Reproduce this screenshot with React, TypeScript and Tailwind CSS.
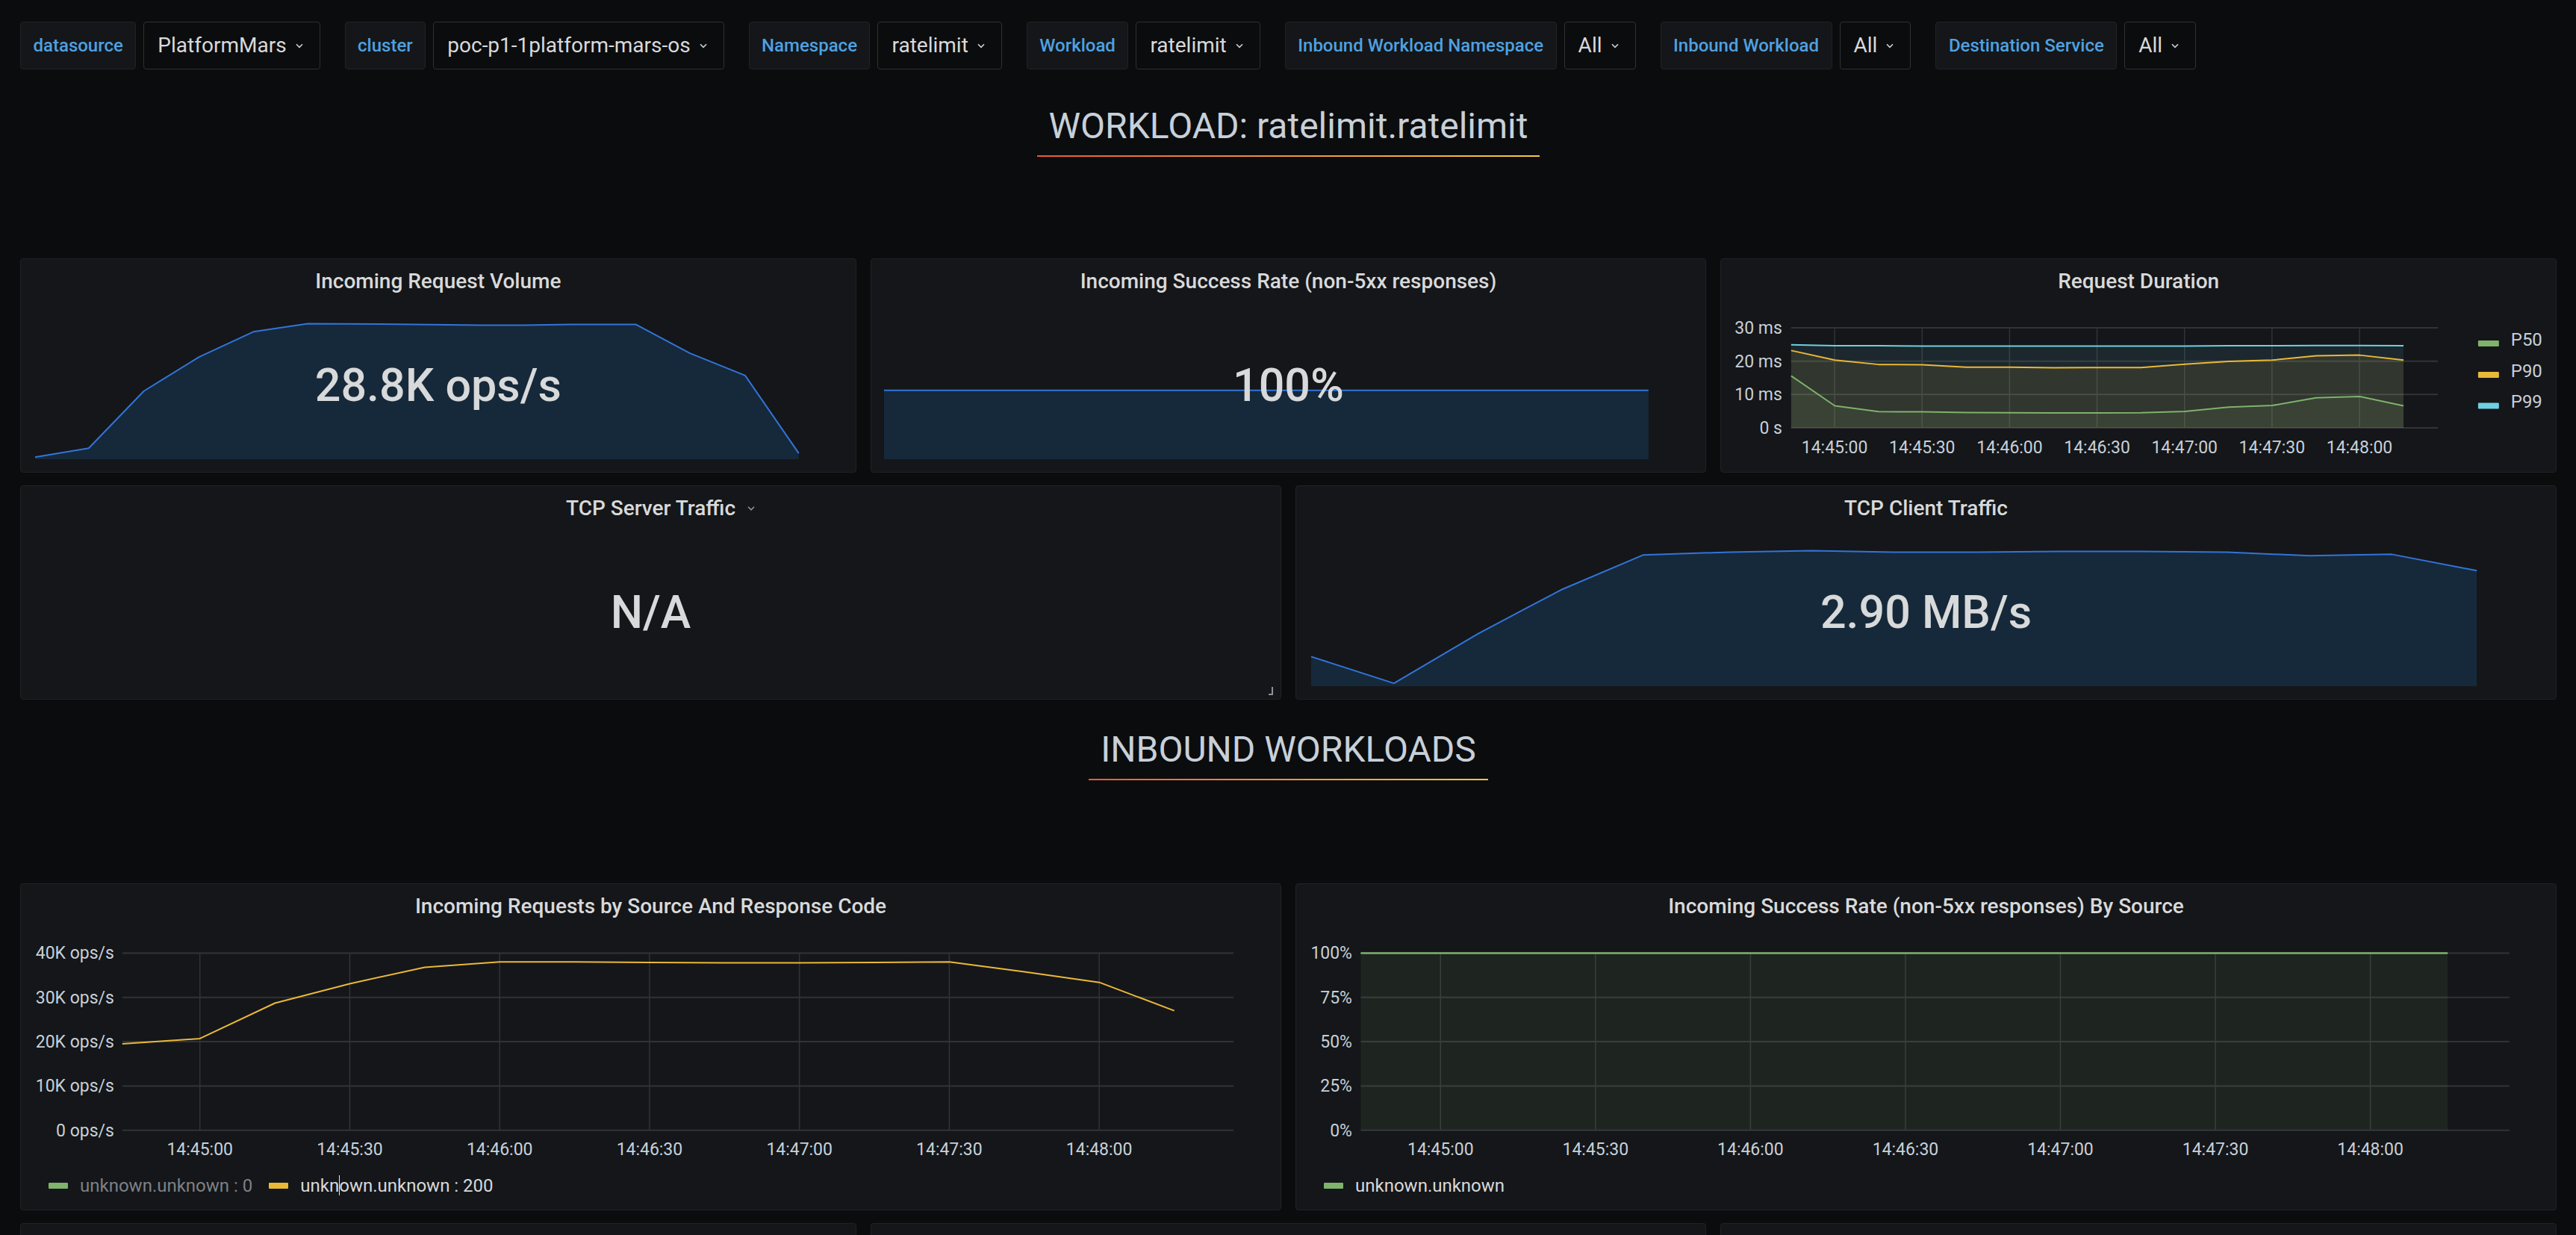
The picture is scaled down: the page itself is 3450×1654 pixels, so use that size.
import React from "react";

type Pt = [number, number];
const pts = (a: Pt[]) => a.map(([x, y]) => `${x},${y}`).join(" ");

const SPARK_LINE = "#3274d9";
const SPARK_FILL = "rgba(31,118,189,0.2)";
const GRID = "#313337";
const AXIS = "#c7d0d9";
const FONT = "Roboto, 'Liberation Sans', sans-serif";
const TIMES = ["14:45:00", "14:45:30", "14:46:00", "14:46:30", "14:47:00", "14:47:30", "14:48:00"];

const VARS = [
  { label: "datasource", value: "PlatformMars" },
  { label: "cluster", value: "poc-p1-1platform-mars-os" },
  { label: "Namespace", value: "ratelimit" },
  { label: "Workload", value: "ratelimit" },
  { label: "Inbound Workload Namespace", value: "All" },
  { label: "Inbound Workload", value: "All" },
  { label: "Destination Service", value: "All" },
];

function Chevron({ className = "" }: { className?: string }) {
  return (
    <svg width="10" height="7" viewBox="0 0 10 7" className={className}>
      <path d="M1 1.2 L5 5.4 L9 1.2" fill="none" stroke="currentColor" strokeWidth="1.6" />
    </svg>
  );
}

function Sparkline({ w, line, bottom }: { w: number; line: Pt[]; bottom: number }) {
  const area: Pt[] = [[line[0][0], bottom], ...line, [line[line.length - 1][0], bottom]];
  return (
    <svg className="absolute inset-0 w-full h-full" viewBox={`0 0 ${w} 287`} preserveAspectRatio="none">
      <polygon points={pts(area)} fill={SPARK_FILL} />
      <polyline
        points={pts(line)}
        fill="none"
        stroke={SPARK_LINE}
        strokeWidth={2}
        vectorEffect="non-scaling-stroke"
        strokeLinejoin="round"
      />
    </svg>
  );
}

function Title({ children }: { children: React.ReactNode }) {
  return (
    <div className="relative h-[60px] shrink-0 flex items-center justify-center text-[28px] font-medium leading-none text-[#d8d9da]">
      {children}
    </div>
  );
}

const panelCls = "relative flex flex-col rounded-[4px] border border-[#202226] bg-[#141619] overflow-hidden";

function StatPanel({
  title,
  value,
  w,
  line,
  extra,
}: {
  title: React.ReactNode;
  value: string;
  w: number;
  line?: Pt[];
  extra?: React.ReactNode;
}) {
  return (
    <div className={`${panelCls} h-[287px]`}>
      {line && <Sparkline w={w} line={line} bottom={270} />}
      <Title>{title}</Title>
      <div className="relative flex-1 flex items-center justify-center pb-[6px] text-[61px] font-medium leading-none text-[#d8d9da]">
        {value}
      </div>
      {extra}
    </div>
  );
}

function SectionHeader({ text, h, pt }: { text: string; h: string; pt: string }) {
  return (
    <div className={`flex justify-center ${h} ${pt}`}>
      <div className="inline-flex flex-col h-fit">
        <div className="px-[16px] text-[48px] leading-[1.2] text-[#c7d0d9]">{text}</div>
        <div className="mt-[10px] h-[2px] bg-linear-to-r from-[#ea5a35] to-[#f7c844]" />
      </div>
    </div>
  );
}

function RequestDuration() {
  const x = (i: number) => 94 + 58.71 * i;
  const y = (v: number) => 226 - 4.467 * v;
  const p99 = [24.9, 24.6, 24.6, 24.5, 24.5, 24.5, 24.5, 24.5, 24.5, 24.5, 24.6, 24.6, 24.7, 24.7, 24.6];
  const p90 = [23.2, 20.3, 19.0, 18.9, 18.2, 18.2, 18.0, 18.1, 18.1, 19.1, 19.9, 20.3, 21.6, 21.8, 20.3];
  const p50 = [15.6, 6.6, 4.85, 4.8, 4.6, 4.55, 4.5, 4.5, 4.55, 4.9, 6.2, 6.7, 9.0, 9.4, 6.6];
  const series = [
    { name: "P99", c: "#6ed0e0", fill: "rgba(110,208,224,0.1)", d: p99 },
    { name: "P90", c: "#eab839", fill: "rgba(234,184,57,0.1)", d: p90 },
    { name: "P50", c: "#7eb26d", fill: "rgba(126,178,109,0.1)", d: p50 },
  ];
  const line = (d: number[]): Pt[] => d.map((v, i) => [x(i), y(v)]);
  const area = (d: number[]): Pt[] => [[x(0), y(0)], ...line(d), [x(d.length - 1), y(0)]];
  const legend = [
    { name: "P50", c: "#7eb26d", y: 116 },
    { name: "P90", c: "#eab839", y: 158 },
    { name: "P99", c: "#6ed0e0", y: 199.5 },
  ];
  return (
    <div className={`${panelCls} h-[287px]`}>
      <Title>Request Duration</Title>
      <svg width="100%" height={225} viewBox="0 60 1120 225" preserveAspectRatio="none" className="block" fontFamily={FONT}>
        {[0, 10, 20, 30].map((v) => (
          <line key={v} x1={94} x2={962} y1={y(v)} y2={y(v)} stroke={GRID} strokeWidth={2} />
        ))}
        {TIMES.map((t, k) => (
          <line key={t} x1={152.4 + 117.4 * k} x2={152.4 + 117.4 * k} y1={y(30)} y2={y(0)} stroke={GRID} strokeWidth={1.5} />
        ))}
        {series.map((s) => (
          <polygon key={s.name + "f"} points={pts(area(s.d))} fill={s.fill} />
        ))}
        {series.map((s) => (
          <polyline key={s.name} points={pts(line(s.d))} fill="none" stroke={s.c} strokeWidth={2} strokeLinejoin="round" />
        ))}
        {[
          ["30 ms", 30],
          ["20 ms", 20],
          ["10 ms", 10],
          ["0 s", 0],
        ].map(([t, v]) => (
          <text key={t as string} x={82} y={y(v as number) + 8} textAnchor="end" fontSize={23} fill={AXIS}>
            {t}
          </text>
        ))}
        {TIMES.map((t, k) => (
          <text key={t} x={152.4 + 117.4 * k} y={260} textAnchor="middle" fontSize={23} fill={AXIS}>
            {t}
          </text>
        ))}
        {legend.map((l) => (
          <g key={l.name}>
            <rect x={1016} y={l.y - 7} width={28} height={8} rx={1} fill={l.c} />
            <text x={1060} y={l.y} fontSize={24} fill={AXIS}>
              {l.name}
            </text>
          </g>
        ))}
      </svg>
    </div>
  );
}

function LegendItem({ color, text, dim }: { color: string; text: string; dim?: boolean }) {
  return (
    <div className="flex items-center gap-[16px]">
      <span className="w-[26px] h-[8px] rounded-[1px]" style={{ background: color }} />
      <span className={dim ? "text-[#7d8187]" : "text-[#d8d9da]"}>{text}</span>
    </div>
  );
}

const GY = [92.5, 151.8, 211.1, 270.4, 329.7];

function RequestsBySource() {
  const vals = [19.5, 20.7, 28.7, 33.1, 36.8, 38.0, 38.0, 37.9, 37.8, 37.8, 37.9, 38.0, 35.8, 33.4, 27.0];
  const x = (i: number) => (i === 0 ? 136 : 139.5 + 100.5 * i);
  const y = (v: number) => 329.7 - v * 5.93;
  const line: Pt[] = vals.map((v, i) => [x(i), y(v)]);
  const labels = ["40K ops/s", "30K ops/s", "20K ops/s", "10K ops/s", "0 ops/s"];
  return (
    <div className={`${panelCls} h-[438px]`}>
      <Title>Incoming Requests by Source And Response Code</Title>
      <svg width="100%" height={320} viewBox="0 60 1689 320" preserveAspectRatio="none" className="block" fontFamily={FONT}>
        {GY.map((gy) => (
          <line key={gy} x1={136} x2={1626} y1={gy} y2={gy} stroke={GRID} strokeWidth={2} />
        ))}
        {TIMES.map((t, k) => (
          <line key={t} x1={240 + 200.97 * k} x2={240 + 200.97 * k} y1={GY[0]} y2={GY[4]} stroke={GRID} strokeWidth={1.5} />
        ))}
        <polyline points={pts(line)} fill="none" stroke="#eab839" strokeWidth={2} strokeLinejoin="round" />
        {labels.map((t, k) => (
          <text key={t} x={125} y={GY[k] + 8} textAnchor="end" fontSize={23} fill={AXIS}>
            {t}
          </text>
        ))}
        {TIMES.map((t, k) => (
          <text key={t} x={240 + 200.97 * k} y={363} textAnchor="middle" fontSize={23} fill={AXIS}>
            {t}
          </text>
        ))}
      </svg>
      <div className="h-[48px] flex items-center pl-[37px] gap-[22px] text-[24px] leading-none">
        <LegendItem color="#7eb26d" text="unknown.unknown : 0" dim />
        <LegendItem color="#eab839" text="unknown.unknown : 200" />
      </div>
      <div className="absolute left-[426px] top-[390px] w-px h-[27px] bg-[#e6e6e6]" />
    </div>
  );
}

function SuccessBySource() {
  const labels = ["100%", "75%", "50%", "25%", "0%"];
  return (
    <div className={`${panelCls} h-[438px]`}>
      <Title>Incoming Success Rate (non-5xx responses) By Source</Title>
      <svg width="100%" height={320} viewBox="0 60 1689 320" preserveAspectRatio="none" className="block" fontFamily={FONT}>
        {GY.map((gy) => (
          <line key={gy} x1={86.5} x2={1626.7} y1={gy} y2={gy} stroke={GRID} strokeWidth={2} />
        ))}
        {TIMES.map((t, k) => (
          <line key={t} x1={193.5 + 207.8 * k} x2={193.5 + 207.8 * k} y1={GY[0]} y2={GY[4]} stroke={GRID} strokeWidth={1.5} />
        ))}
        <rect x={86.5} y={GY[0]} width={1544 - 86.5} height={GY[4] - GY[0]} fill="rgba(126,178,109,0.1)" />
        <line x1={86.5} x2={1544} y1={GY[0]} y2={GY[0]} stroke="#7eb26d" strokeWidth={2.4} />
        {labels.map((t, k) => (
          <text key={t} x={75} y={GY[k] + 8} textAnchor="end" fontSize={23} fill={AXIS}>
            {t}
          </text>
        ))}
        {TIMES.map((t, k) => (
          <text key={t} x={193.5 + 207.8 * k} y={363} textAnchor="middle" fontSize={23} fill={AXIS}>
            {t}
          </text>
        ))}
      </svg>
      <div className="h-[48px] flex items-center pl-[37px] gap-[22px] text-[24px] leading-none">
        <LegendItem color="#7eb26d" text="unknown.unknown" />
      </div>
    </div>
  );
}

export default function App() {
  const p1: Pt[] = [
    [19, 267], [91, 255], [165, 178], [239, 132], [312, 98], [385, 87], [528, 88], [617, 89],
    [676, 89], [750, 88], [825, 88], [898, 127], [972, 157], [1044, 262],
  ];
  const p2: Pt[] = [
    [17, 177], [1043, 177],
  ];
  const tcp: Pt[] = [
    [20, 230], [131, 266], [244, 199], [355, 140], [465, 93], [581, 89], [691, 87], [801, 89],
    [912, 89], [1022, 88], [1132, 88], [1248, 89], [1359, 94], [1469, 92], [1583, 114],
  ];

  return (
    <div className="min-h-screen w-full bg-[#0b0c0e] pl-[27px] pr-[26px] pt-[29px] font-['Roboto','Liberation_Sans',sans-serif]">
      {/* Variables bar */}
      <div className="flex items-center gap-[33px] h-[64px]">
        {VARS.map((v) => (
          <div key={v.label} className="flex items-center gap-[10px] h-[64px]">
            <div className="h-full px-[16.5px] flex items-center rounded-[4px] bg-[#141619] border border-[#202226] text-[24px] font-medium text-[#4fa1e0] leading-none">
              {v.label}
            </div>
            <div className="h-full pl-[18px] pr-[22px] flex items-center gap-[12px] rounded-[4px] bg-[#0b0c0e] border border-[#2c3235] text-[28px] text-[#d8d9da] leading-none">
              <span>{v.value}</span>
              <Chevron className="text-[#c7d0d9]" />
            </div>
          </div>
        ))}
      </div>

      <SectionHeader text="WORKLOAD: ratelimit.ratelimit" h="h-[253px]" pt="pt-[47px]" />

      {/* Row 1 */}
      <div className="grid grid-cols-3 gap-x-[19px]">
        <StatPanel title="Incoming Request Volume" value="28.8K ops/s" w={1120} line={p1} />
        <StatPanel title="Incoming Success Rate (non-5xx responses)" value="100%" w={1120} line={p2} />
        <RequestDuration />
      </div>

      {/* Row 2 */}
      <div className="grid grid-cols-2 gap-x-[19px] mt-[17px]">
        <StatPanel
          title={
            <span className="relative">
              TCP Server Traffic
              <Chevron className="absolute left-full top-1/2 ml-[16px] -translate-y-1/2 text-[#8e9297]" />
            </span>
          }
          value="N/A"
          w={1689}
          extra={
            <svg className="absolute right-[9px] bottom-[4px]" width="10" height="12" viewBox="0 0 10 12">
              <path d="M8 0 V10 H3" fill="none" stroke="#8e9297" strokeWidth="2" />
            </svg>
          }
        />
        <StatPanel title="TCP Client Traffic" value="2.90 MB/s" w={1689} line={tcp} />
      </div>

      <SectionHeader text="INBOUND WORKLOADS" h="h-[246px]" pt="pt-[38px]" />

      {/* Row 3 */}
      <div className="grid grid-cols-2 gap-x-[19px]">
        <RequestsBySource />
        <SuccessBySource />
      </div>

      {/* Row 4 (partially visible) */}
      <div className="grid grid-cols-3 gap-x-[19px] mt-[17px] pb-[40px]">
        <div className={`${panelCls} h-[287px]`} />
        <div className={`${panelCls} h-[287px]`} />
        <div className={`${panelCls} h-[287px]`} />
      </div>
    </div>
  );
}
